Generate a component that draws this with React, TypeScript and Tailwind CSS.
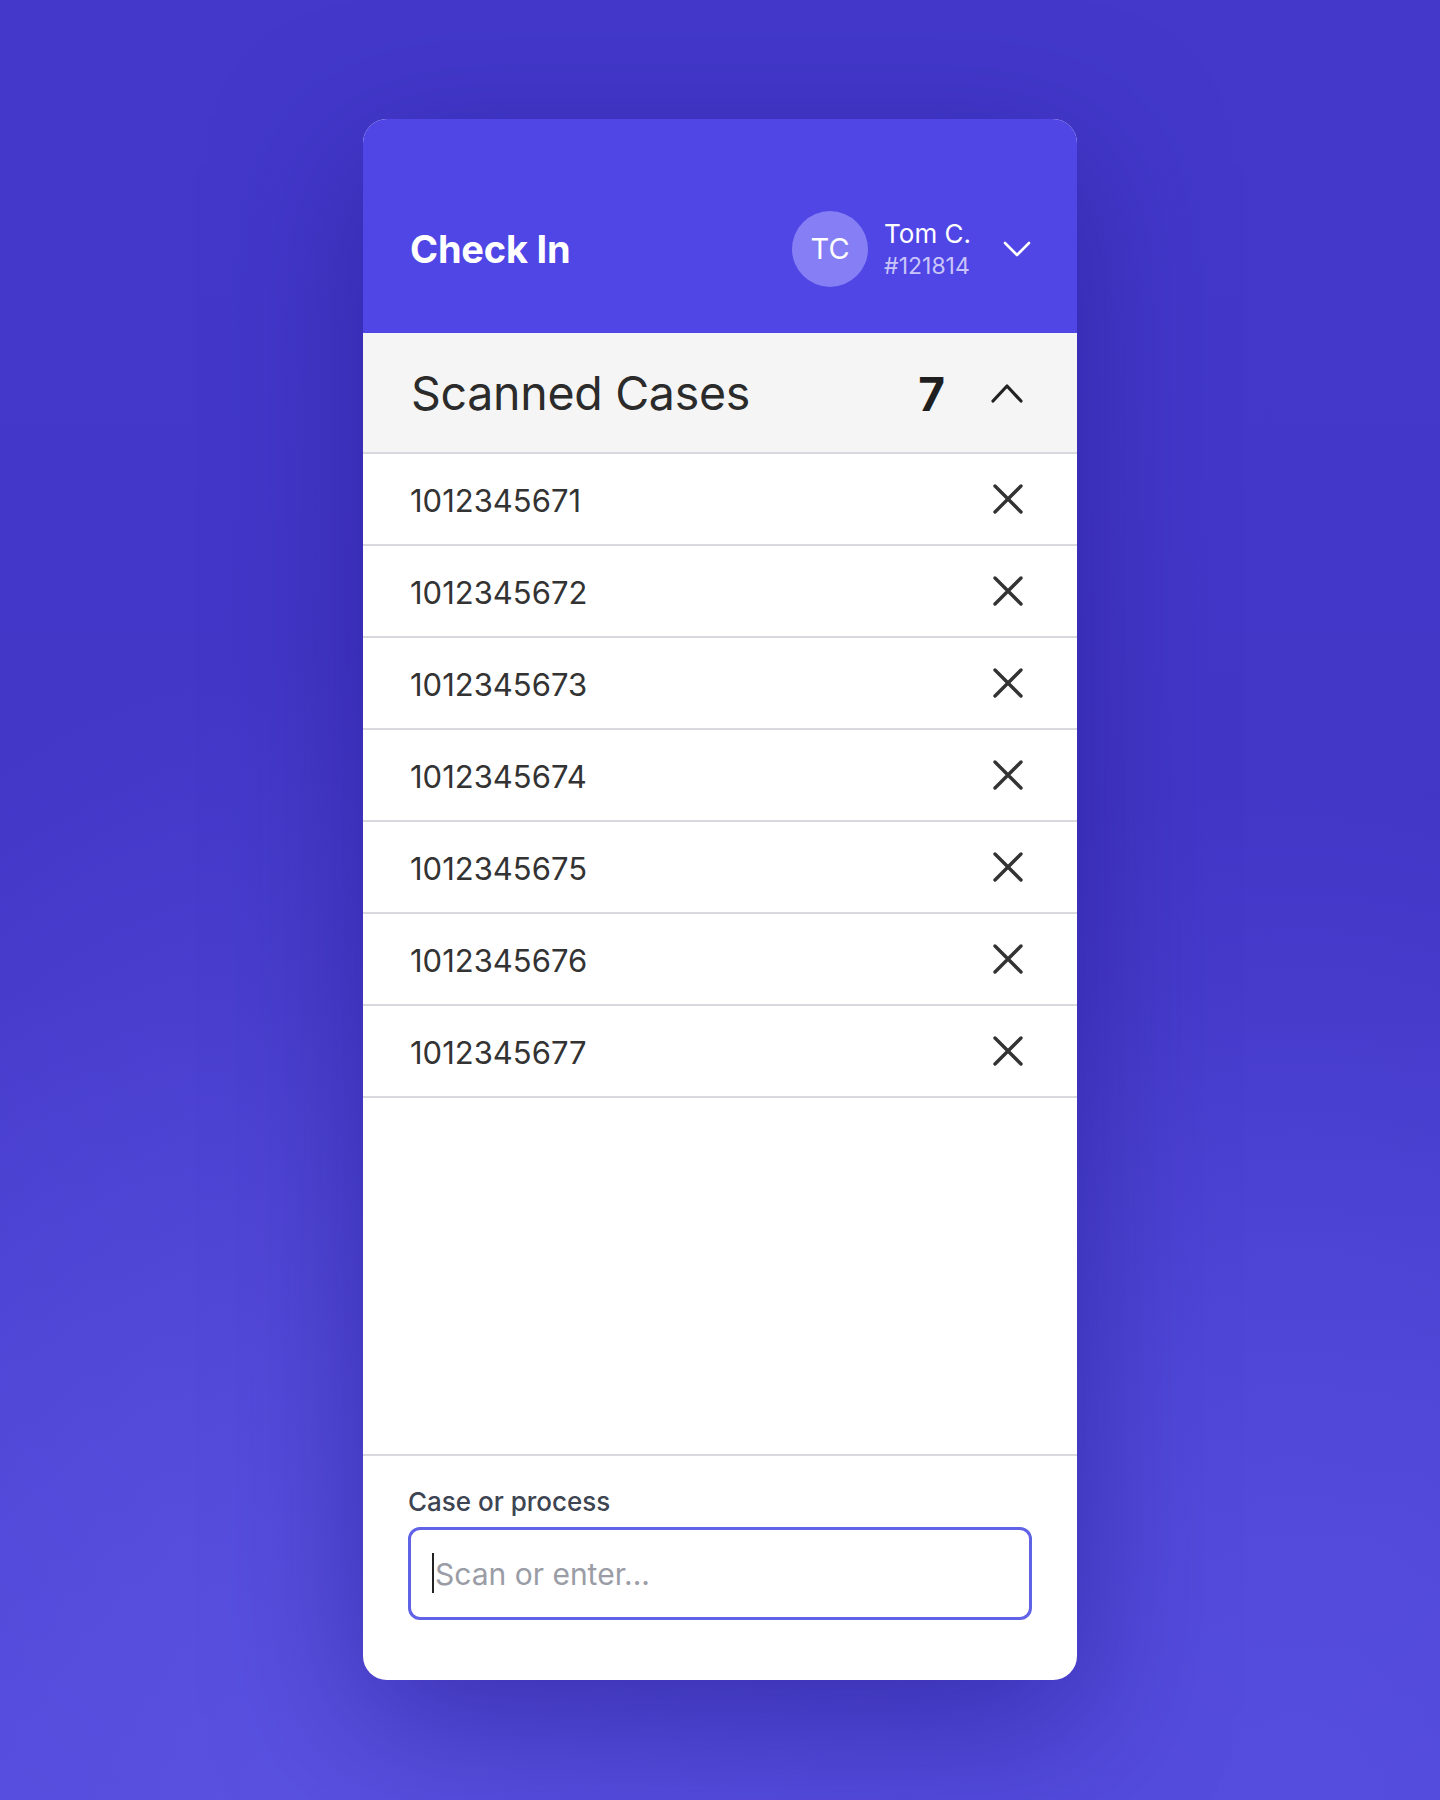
import { useState } from "react";

const CASES = [
  "1012345671",
  "1012345672",
  "1012345673",
  "1012345674",
  "1012345675",
  "1012345676",
  "1012345677",
];

function XIcon() {
  return (
    <svg width="30" height="30" viewBox="0 0 30 30" fill="none" stroke="#333333" strokeWidth="3.4" strokeLinecap="round">
      <path d="M2 2L28 28M28 2L2 28" />
    </svg>
  );
}

function ChevronUp() {
  return (
    <svg width="32" height="20" viewBox="0 0 32 20" fill="none" stroke="#222222" strokeWidth="3.2" strokeLinecap="round" strokeLinejoin="round">
      <path d="M2 18L16 3L30 18" />
    </svg>
  );
}

function ChevronDown() {
  return (
    <svg width="28" height="16" viewBox="0 0 28 16" fill="none" stroke="#ffffff" strokeWidth="2.6" strokeLinecap="round" strokeLinejoin="round">
      <path d="M2 2L14 14L26 2" />
    </svg>
  );
}

export default function App() {
  const [cases, setCases] = useState(CASES);

  return (
    <div
      className="min-h-[1800px] w-full flex justify-center pt-[119px] bg-[radial-gradient(ellipse_at_20%_100%,#5a51e0_0%,transparent_45%),radial-gradient(ellipse_at_90%_100%,#554ddd_0%,transparent_40%),linear-gradient(180deg,#4338ca_0%,#4236c6_55%,#5048da_100%)]"
      style={{ fontFamily: "Inter, 'Noto Sans', sans-serif" }}
    >
      <div className="w-[714px] h-[1561px] flex flex-col bg-white rounded-[24px] overflow-hidden shadow-[0_40px_140px_rgba(35,25,140,0.55)]">
        {/* Header */}
        <div className="bg-[#4f46e5] flex items-center justify-between pl-[47px] pr-[46px] pt-[92px] pb-[46px]">
          <h1 className="text-[38px] font-bold text-white tracking-[-0.2px]">Check In</h1>
          <button className="flex items-center">
            <div className="w-[76px] h-[76px] rounded-full bg-[#857ef4] flex items-center justify-center text-white text-[29px]">
              TC
            </div>
            <div className="ml-[16px] flex flex-col items-start leading-none">
              <span className="text-[26px] text-white">Tom C.</span>
              <span className="text-[23px] text-[#c9c5fb] mt-[8px]">#121814</span>
            </div>
            <div className="ml-[32px]">
              <ChevronDown />
            </div>
          </button>
        </div>

        {/* Scanned cases header */}
        <div className="h-[121px] flex items-center bg-[#f5f5f5] border-b-2 border-[#d8d8de] pl-[48px] pr-[54px]">
          <h2 className="flex-1 text-[46.5px] text-[#2b2b2b] tracking-[-0.3px] pt-[3px]">Scanned Cases</h2>
          <span className="text-[46px] font-bold text-[#1f1f1f] pt-[3px]">{cases.length}</span>
          <div className="ml-[46px]">
            <ChevronUp />
          </div>
        </div>

        {/* List */}
        <ul className="flex flex-col">
          {cases.map((c) => (
            <li
              key={c}
              className="h-[92px] flex items-center justify-between border-b-2 border-[#d8d8de] pl-[47px] pr-[54px]"
            >
              <span className="text-[31px] text-[#333333] pt-[4px]">{c}</span>
              <button onClick={() => setCases(cases.filter((x) => x !== c))} aria-label="Remove">
                <XIcon />
              </button>
            </li>
          ))}
        </ul>

        <div className="flex-1" />

        {/* Input */}
        <div className="border-t-2 border-[#d8d8de] pt-[31px] pb-[60px] pl-[45px] pr-[45px]">
          <label className="block text-[26px] font-medium text-[#3d4452] leading-[30px]">Case or process</label>
          <div className="relative mt-[10px]">
            <input
              placeholder="Scan or enter..."
              className="w-full h-[93px] rounded-[12px] border-[3px] border-[#6063e6] pl-[24px] text-[30px] text-[#333] placeholder:text-[#9a9ca6] outline-none"
            />
            <span className="absolute left-[24px] top-[26px] w-[2px] h-[40px] bg-[#222]" />
          </div>
        </div>
      </div>
    </div>
  );
}
